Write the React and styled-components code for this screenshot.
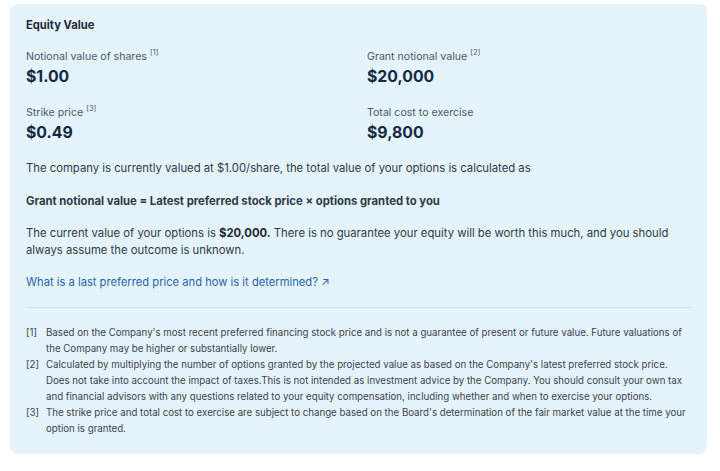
import React from "react";
import styled, { createGlobalStyle } from "styled-components";

const GlobalStyle = createGlobalStyle`
  body {
    margin: 0;
    background: #ffffff;
    font-family: Inter, "Noto Sans", sans-serif;
  }
`;

const Page = styled.div`
  padding: 4px 13px 18px 10px;
`;

const Card = styled.section`
  background: #e4f3fc;
  border-radius: 8px;
  padding: 13px 16px 17px 16px;
  color: #2d3540;
`;

const Title = styled.h2`
  margin: 0;
  font-size: 11.2px;
  font-weight: 700;
  color: #1f2937;
  line-height: 16px;
`;

const Stats = styled.div`
  display: grid;
  grid-template-columns: 341px 1fr;
  row-gap: 19px;
  margin-top: 17px;
`;

const Stat = styled.div`
  display: flex;
  flex-direction: column;
  gap: 3px;
`;

const Label = styled.div`
  font-size: 10.6px;
  color: #505a66;
  line-height: 14px;
`;

const Ref = styled.sup`
  font-size: 7.5px;
  margin-left: 3px;
  vertical-align: 5px;
  line-height: 0;
`;

const Value = styled.div`
  font-size: 15.8px;
  font-weight: 700;
  color: #132a42;
  line-height: 20px;
`;

const Para = styled.p`
  margin: ${(p) => p.$top || 15}px 0 0;
  font-size: 11.3px;
  line-height: 17px;
  color: #313a45;
  font-weight: ${(p) => (p.$bold ? 700 : 400)};
`;

const Strong = styled.strong`
  font-weight: 700;
  color: #1f2937;
`;

const Link = styled.a`
  display: block;
  margin-top: 15px;
  font-size: 11.2px;
  line-height: 17px;
  color: #2767a6;
  text-decoration: none;
`;

const Divider = styled.hr`
  border: none;
  border-top: 1px solid #d0e2ee;
  margin: 16px 0 0;
`;

const Notes = styled.ol`
  list-style: none;
  margin: 17px 0 0;
  padding: 0;
`;

const Note = styled.li`
  display: grid;
  grid-template-columns: 20px 1fr;
  font-size: 9.7px;
  line-height: 16px;
  color: #3b434d;
`;

const notes = [
  "Based on the Company's most recent preferred financing stock price and is not a guarantee of present or future value. Future valuations of the Company may be higher or substantially lower.",
  "Calculated by multiplying the number of options granted by the projected value as based on the Company's latest preferred stock price. Does not take into account the impact of taxes.This is not intended as investment advice by the Company. You should consult your own tax and financial advisors with any questions related to your equity compensation, including whether and when to exercise your options.",
  "The strike price and total cost to exercise are subject to change based on the Board's determination of the fair market value at the time your option is granted.",
];

export default function App() {
  return (
    <Page>
      <GlobalStyle />
      <Card>
        <Title>Equity Value</Title>
        <Stats>
          <Stat>
            <Label>
              Notional value of shares<Ref>[1]</Ref>
            </Label>
            <Value>$1.00</Value>
          </Stat>
          <Stat>
            <Label>
              Grant notional value<Ref>[2]</Ref>
            </Label>
            <Value>$20,000</Value>
          </Stat>
          <Stat>
            <Label>
              Strike price<Ref>[3]</Ref>
            </Label>
            <Value>$0.49</Value>
          </Stat>
          <Stat>
            <Label>Total cost to exercise</Label>
            <Value>$9,800</Value>
          </Stat>
        </Stats>
        <Para $top={17}>
          The company is currently valued at $1.00/share, the total value of your
          options is calculated as
        </Para>
        <Para $bold $top={16}>
          Grant notional value = Latest preferred stock price × options granted to you
        </Para>
        <Para>
          The current value of your options is <Strong>$20,000.</Strong> There is no
          guarantee your equity will be worth this much, and you should always assume
          the outcome is unknown.
        </Para>
        <Link href="#">What is a last preferred price and how is it determined? ↗</Link>
        <Divider />
        <Notes>
          {notes.map((n, i) => (
            <Note key={i}>
              <span>[{i + 1}]</span>
              <span>{n}</span>
            </Note>
          ))}
        </Notes>
      </Card>
    </Page>
  );
}
